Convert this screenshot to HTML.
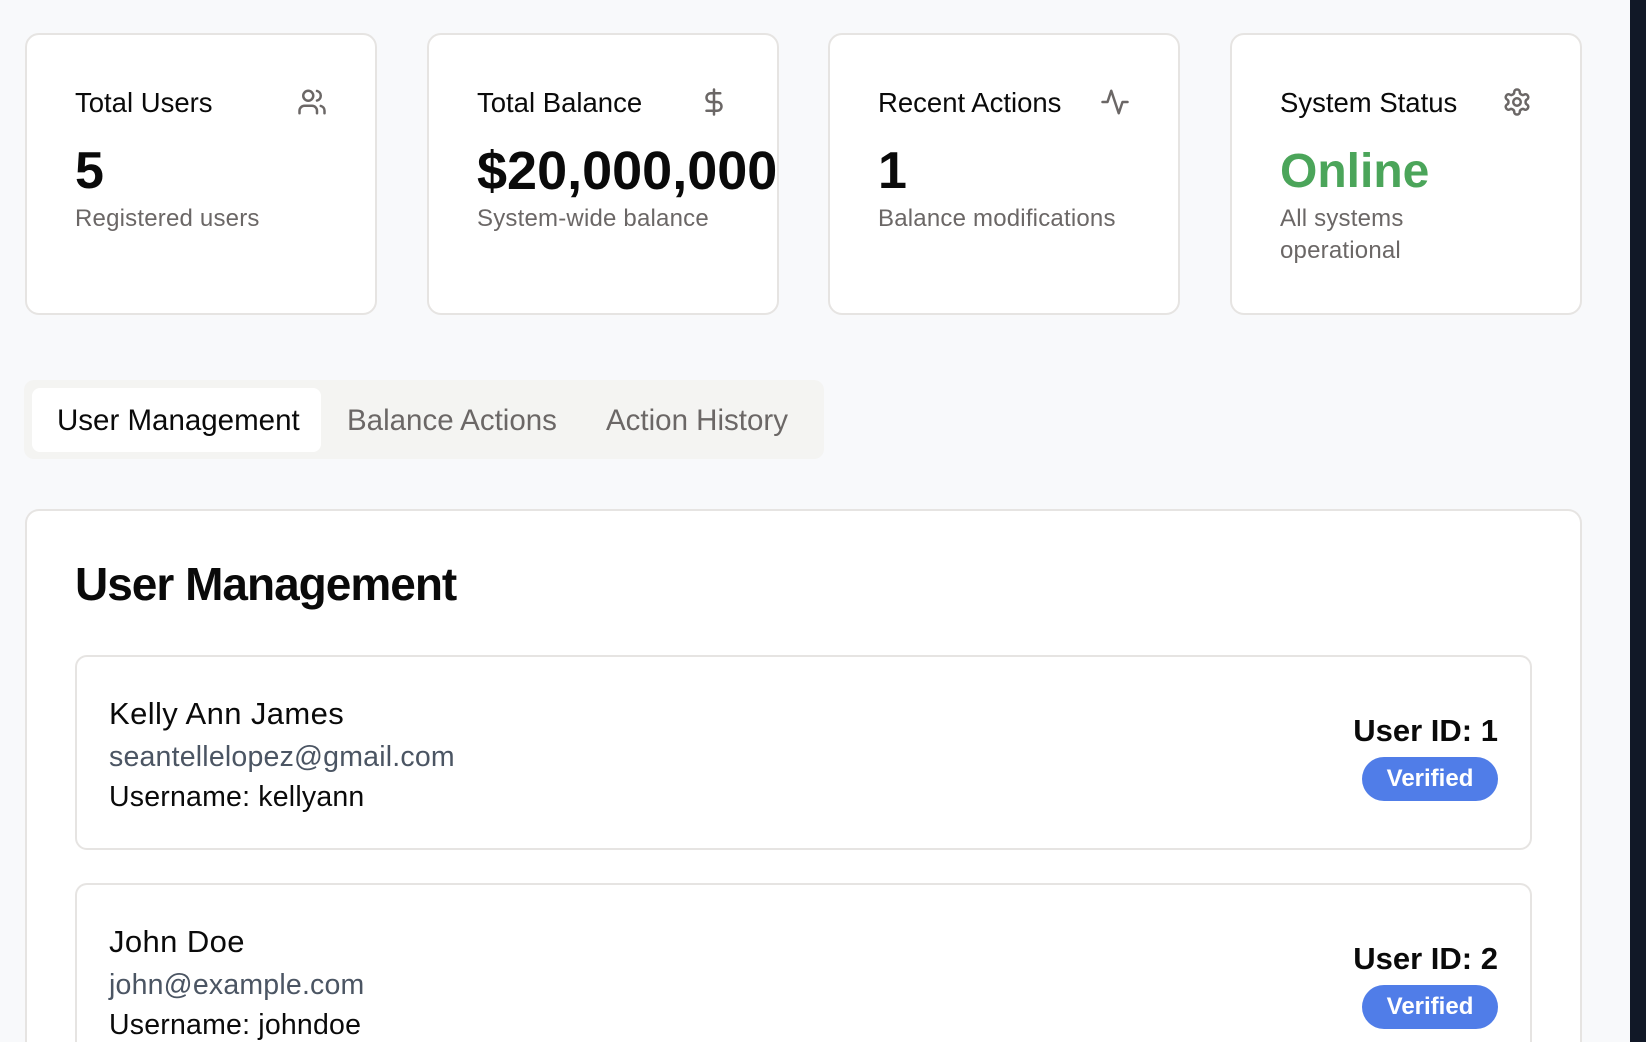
<!DOCTYPE html>
<html style="overflow:hidden;width:1646px;height:1042px"><head><meta charset="utf-8"><style>
*{box-sizing:border-box;margin:0;padding:0}
body{width:1646px;height:1042px;overflow:hidden;background:#f8f9fb;font-family:"Liberation Sans",sans-serif;position:relative;color:#0a0a0a}
.dark{position:absolute;left:1630px;top:0;width:16px;height:1042px;background:#111827}
.card{position:absolute;top:33px;width:352px;height:282px;background:#fff;border:2px solid #e6e4e2;border-radius:14px}
.card .t{position:absolute;left:48px;top:52px;font-size:27.5px}
.card .ic{position:absolute;left:270px;top:52px;width:30px;height:30px}
.card .n{position:absolute;left:48px;top:106px;font-size:52px;font-weight:bold}
.card .s{position:absolute;left:48px;top:168px;font-size:24px;color:#6b6766;line-height:32px;width:230px;letter-spacing:0.2px}
.tabs{position:absolute;left:24px;top:380px;width:800px;height:79px;background:#f4f4f2;border-radius:10px}
.tab{position:absolute;top:404px;font-size:29.5px;color:#6b6766}
.act{position:absolute;left:32px;top:388px;width:289px;height:64px;background:#fff;border-radius:8px}
.main{position:absolute;left:25px;top:509px;width:1557px;height:533px;background:#fff;border:2px solid #e6e4e2;border-bottom:none;border-radius:14px 14px 0 0}
h1{position:absolute;left:75px;top:557px;font-size:46px;font-weight:bold;letter-spacing:-1px}
.u{position:absolute;left:75px;width:1457px;height:195px;background:#fff;border:2px solid #e6e4e2;border-radius:12px}
.u2{height:159px;border-bottom:none;border-radius:12px 12px 0 0}
.u .nm{position:absolute;left:32px;top:39px;font-size:31px;letter-spacing:0.4px}
.u .em{position:absolute;left:32px;top:84px;font-size:28.5px;color:#4b5563;letter-spacing:0.2px}
.u .un{position:absolute;left:32px;top:124px;font-size:28.5px;letter-spacing:0.2px}
.u .id{position:absolute;right:32px;top:56px;font-size:31px;font-weight:bold}
.u .b{position:absolute;right:32px;top:100px;width:136px;height:44px;border-radius:22px;background:#507de8;color:#fff;font-size:24px;font-weight:bold;text-align:center;line-height:44px}
svg{fill:none;stroke:#6b6766;stroke-width:2;stroke-linecap:round;stroke-linejoin:round}
</style></head><body>
<div class="dark"></div>
<div class="card" style="left:25px"><div class="t">Total Users</div>
<svg class="ic" viewBox="0 0 24 24"><path d="M16 21v-2a4 4 0 0 0-4-4H6a4 4 0 0 0-4 4v2"/><circle cx="9" cy="7" r="4"/><path d="M22 21v-2a4 4 0 0 0-3-3.87M16 3.13a4 4 0 0 1 0 7.75"/></svg>
<div class="n">5</div><div class="s">Registered users</div></div>
<div class="card" style="left:427px"><div class="t">Total Balance</div>
<svg class="ic" viewBox="0 0 24 24"><path d="M12 2v20M17 5H9.5a3.5 3.5 0 0 0 0 7h5a3.5 3.5 0 0 1 0 7H6"/></svg>
<div class="n" style="font-size:54px;top:105px">$20,000,000</div><div class="s" style="width:300px">System-wide balance</div></div>
<div class="card" style="left:828px"><div class="t">Recent Actions</div>
<svg class="ic" viewBox="0 0 24 24"><path d="M22 12h-4l-3 9L9 3l-3 9H2"/></svg>
<div class="n">1</div><div class="s" style="width:300px">Balance modifications</div></div>
<div class="card" style="left:1230px"><div class="t">System Status</div>
<svg class="ic" viewBox="0 0 24 24"><path d="M12.22 2h-.44a2 2 0 0 0-2 2v.18a2 2 0 0 1-1 1.73l-.43.25a2 2 0 0 1-2 0l-.15-.08a2 2 0 0 0-2.73.73l-.22.38a2 2 0 0 0 .73 2.73l.15.1a2 2 0 0 1 1 1.72v.51a2 2 0 0 1-1 1.74l-.15.09a2 2 0 0 0-.73 2.73l.22.38a2 2 0 0 0 2.73.73l.15-.08a2 2 0 0 1 2 0l.43.25a2 2 0 0 1 1 1.73V20a2 2 0 0 0 2 2h.44a2 2 0 0 0 2-2v-.18a2 2 0 0 1 1-1.73l.43-.25a2 2 0 0 1 2 0l.15.08a2 2 0 0 0 2.73-.73l.22-.39a2 2 0 0 0-.73-2.73l-.15-.08a2 2 0 0 1-1-1.74v-.5a2 2 0 0 1 1-1.74l.15-.09a2 2 0 0 0 .73-2.73l-.22-.38a2 2 0 0 0-2.73-.73l-.15.08a2 2 0 0 1-2 0l-.43-.25a2 2 0 0 1-1-1.73V4a2 2 0 0 0-2-2z"/><circle cx="12" cy="12" r="3"/></svg>
<div class="n" style="color:#4ba55a;font-size:48px;top:109px">Online</div><div class="s">All systems operational</div></div>
<div class="tabs"></div><div class="act"></div>
<div class="tab" style="left:57px;color:#0a0a0a">User Management</div>
<div class="tab" style="left:347px">Balance Actions</div>
<div class="tab" style="left:606px">Action History</div>
<div class="main"></div>
<h1>User Management</h1>
<div class="u" style="top:655px"><div class="nm">Kelly Ann James</div><div class="em">seantellelopez@gmail.com</div><div class="un">Username: kellyann</div><div class="id">User ID: 1</div><div class="b">Verified</div></div>
<div class="u u2" style="top:883px"><div class="nm">John Doe</div><div class="em">john@example.com</div><div class="un">Username: johndoe</div><div class="id">User ID: 2</div><div class="b">Verified</div></div>
</body></html>
